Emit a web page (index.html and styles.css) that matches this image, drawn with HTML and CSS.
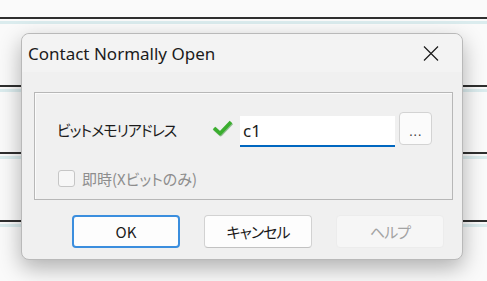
FILE: index.html
```html
<!DOCTYPE html>
<html lang="ja">
<head>
    <meta charset="UTF-8">
    <meta name="viewport" content="width=device-width, initial-scale=1.0">
    <title>Contact Normally Open</title>
    <link rel="stylesheet" href="styles.css">
</head>
<body>
    <div class="ladder">
        <div class="rung"></div>
        <div class="rung"></div>
        <div class="rung"></div>
        <div class="rung"></div>
    </div>

    <div class="dialog">
        <div class="titlebar">
            <span class="title">Contact Normally Open</span>
            <button class="close" aria-label="Close">
                <svg width="16" height="15" viewBox="0 0 16 15">
                    <path d="M1 0.5 L15 14.5 M15 0.5 L1 14.5" stroke="#1b1b1b" stroke-width="1.2" fill="none"/>
                </svg>
            </button>
        </div>

        <div class="group">
            <div class="field-row">
                <label class="field-label">ビットメモリアドレス</label>
                <svg class="valid-mark" width="24" height="35" viewBox="0 0 24 35">
                    <path d="M3 16 L9 21.5 L20 10" stroke="#1f7f1f" stroke-width="4" fill="none" stroke-linejoin="round" transform="translate(0.6 0.8)" opacity="0.45"/>
                    <path d="M3 16 L9 21.5 L20 10" stroke="#3aae2e" stroke-width="3.6" fill="none" stroke-linejoin="round"/>
                </svg>
                <input class="address" type="text" value="c1">
                <button class="browse">...</button>
            </div>
            <label class="option">
                <span class="box"></span>
                即時(Xビットのみ)
            </label>
        </div>

        <div class="actions">
            <button class="btn btn-default">OK</button>
            <button class="btn">キャンセル</button>
            <button class="btn" disabled>ヘルプ</button>
        </div>
    </div>
</body>
</html>
```

FILE: styles.css
```css
body {
    margin: 0;
    background-color: #fafafa;
    font-family: "Noto Sans", "Noto Sans CJK JP", sans-serif;
    color: #1b1b1b;
    height: 281px;
    overflow: hidden;
}

.ladder {
    padding-top: 17px;
}

.rung {
    height: 65.6px;
    border-top: 2px solid #2f2f2f;
}

.rung::after {
    content: "";
    display: block;
    margin-top: 2px;
    height: 3px;
    background: #dbecee;
}

/* modal dialog sits over the ladder */
.dialog {
    position: absolute;
    left: 21px;
    top: 33px;
    width: 440px;
    height: 225px;
    background: #f0f0f0;
    border: 1px solid #b9b9b9;
    border-radius: 8px;
    box-shadow: 0 8px 22px rgba(0, 0, 0, 0.3);
    display: flex;
    flex-direction: column;
}

.titlebar {
    height: 38px;
    display: flex;
    align-items: center;
    justify-content: space-between;
    padding-left: 6px;
    background: #f3f3f3;
    border-radius: 8px 8px 0 0;
}

.title {
    font-size: 17px;
}

.close {
    width: 46px;
    height: 38px;
    border: none;
    background: transparent;
    padding: 0;
    margin-right: 8px;
    display: flex;
    align-items: center;
    justify-content: center;
}

.group {
    margin: 20px 0 0 12px;
    width: 419px;
    height: 108px;
    border: 1px solid #b7b7b7;
    box-shadow: inset 1px 1px 0 #fbfbfb;
    padding: 19px 0 0 22px;
    box-sizing: border-box;
}

.field-row {
    display: flex;
    align-items: flex-start;
}

.field-label {
    width: 154px;
    height: 35px;
    line-height: 35px;
    font-family: "Noto Sans CJK JP", sans-serif;
    font-feature-settings: "palt";
    font-size: 15px;
    letter-spacing: -1px;
    color: #1b1b1b;
}

.address {
    width: 152px;
    height: 29px;
    margin: 4px 0 0 5px;
    padding: 0 0 0 3px;
    box-sizing: content-box;
    border: none;
    border-bottom: 2px solid #0067c0;
    background: #fff;
    font-family: "Noto Sans", sans-serif;
    font-size: 17px;
    color: #1b1b1b;
    outline: none;
}

.browse {
    width: 33px;
    height: 33px;
    margin-left: 4px;
    border: 1px solid #d3d3d3;
    border-radius: 4px;
    background: #fbfbfb;
    font-size: 14px;
    color: #444;
    padding: 4px 0 0;
    letter-spacing: 0.5px;
}

.option {
    display: flex;
    align-items: center;
    gap: 7px;
    margin: 21px 0 0 1px;
    font-family: "Noto Sans CJK JP", sans-serif;
    font-feature-settings: "palt";
    font-size: 15px;
    color: #8d8d8d;
}

.box {
    width: 15px;
    height: 15px;
    border: 1px solid #c6c6c6;
    border-radius: 3px;
    background: #f7f7f7;
}

.actions {
    display: flex;
    gap: 24px;
    margin: 15px 0 0 50px;
}

.btn {
    width: 108px;
    height: 33px;
    border: 1px solid #d2d2d2;
    border-bottom-color: #c2c2c2;
    border-radius: 4px;
    background: #fdfdfd;
    font-family: "Noto Sans CJK JP", sans-serif;
    font-feature-settings: "palt";
    font-size: 15px;
    letter-spacing: -1px;
    color: #1b1b1b;
    padding: 0;
}

.btn-default {
    border: 2px solid #3b8ede;
    letter-spacing: 0;
}

.btn:disabled {
    background: #f6f6f6;
    border-color: #ececec;
    color: #a3a3a3;
}
```
